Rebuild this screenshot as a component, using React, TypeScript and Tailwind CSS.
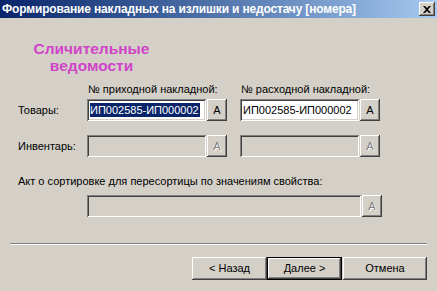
import React from "react"

const sunken =
  "shadow-[inset_1px_1px_0_#808080,inset_-1px_-1px_0_#ffffff,inset_2px_2px_0_#404040,inset_-2px_-2px_0_#d4d0c8]"
const raised =
  "shadow-[inset_-1px_-1px_0_#404040,inset_1px_1px_0_#ffffff,inset_-2px_-2px_0_#808080,inset_2px_2px_0_#d4d0c8]"

function Field({ value, selected, disabled, wide }: { value?: string; selected?: boolean; disabled?: boolean; wide?: boolean }) {
  return (
    <div
      className={`${wide ? "w-[274px]" : "w-[119px]"} h-[22px] flex items-center px-[3px] ${sunken} ${
        disabled ? "bg-[#d4d0c8]" : "bg-white"
      }`}
    >
      {value && (
        <span className={`leading-[14px] ${selected ? "bg-[#0a246a] text-white pr-[1px]" : "text-black"}`}>{value}</span>
      )}
    </div>
  )
}

function PickButton({ disabled }: { disabled?: boolean }) {
  return (
    <div
      className={`w-[20px] h-[22px] flex items-center justify-center bg-[#d4d0c8] ${raised} ${
        disabled ? "text-[#808080] [text-shadow:1px_1px_0_#ffffff]" : "text-black"
      }`}
    >
      A
    </div>
  )
}

function DlgButton({ label, isDefault }: { label: string; isDefault?: boolean }) {
  return (
    <div
      className={`h-[23px] flex items-center justify-center bg-[#d4d0c8] ${
        isDefault
          ? "w-[75px] border border-black shadow-[inset_-1px_-1px_0_#404040,inset_1px_1px_0_#ffffff,inset_-2px_-2px_0_#808080]"
          : `w-[75px] ${raised}`
      }`}
    >
      {label}
    </div>
  )
}

export default function App() {
  return (
    <div className="w-[437px] h-[291px] bg-[#d4d0c8] flex flex-col text-[11px] text-black font-['Liberation_Sans',Arial,sans-serif] overflow-hidden">
      {/* Title bar */}
      <div className="h-[18px] shrink-0 flex items-center justify-between pl-[2px] pr-[2px] bg-gradient-to-r from-[#0a246a] to-[#a6caf0]">
        <span className="text-white font-bold text-[12px] tracking-[-0.17px] leading-[18px] whitespace-nowrap">
          Формирование накладных на излишки и недостачу [номера]
        </span>
        <div className={`w-[16px] h-[14px] bg-[#d4d0c8] flex items-center justify-center ${raised}`}>
          <svg width="8" height="7" viewBox="0 0 8 7">
            <path d="M0 0h2l2 2 2-2h2L5 3.5 8 7H6L4 5 2 7H0l3-3.5z" fill="#000" />
          </svg>
        </div>
      </div>

      {/* Heading */}
      <div className="mt-[22px] w-[183px] text-center text-[15.5px] leading-[17px] font-bold text-[#d044c8]">
        Сличительные
        <br />
        ведомости
      </div>

      {/* Form */}
      <div className="pl-[18px] flex flex-col">
        <div className="mt-[9px] flex leading-[13px]">
          <span className="ml-[70px] w-[153px]">№ приходной накладной:</span>
          <span>№ расходной накладной:</span>
        </div>

        <div className="mt-[3px] flex items-center">
          <span className="w-[69px]">Товары:</span>
          <div className="flex gap-[1px]">
            <Field value="ИП002585-ИП000002" selected />
            <PickButton />
          </div>
          <div className="ml-[13px] flex gap-[1px]">
            <Field value="ИП002585-ИП000002" />
            <PickButton />
          </div>
        </div>

        <div className="mt-[14px] flex items-center">
          <span className="w-[69px]">Инвентарь:</span>
          <div className="flex gap-[1px]">
            <Field disabled />
            <PickButton disabled />
          </div>
          <div className="ml-[13px] flex gap-[1px]">
            <Field disabled />
            <PickButton disabled />
          </div>
        </div>

        <div className="mt-[18px] leading-[13px]">Акт о сортировке для пересортицы по значениям свойства:</div>

        <div className="mt-[7px] ml-[69px] flex gap-[1px]">
          <Field disabled wide />
          <PickButton disabled />
        </div>
      </div>

      {/* Separator */}
      <div className="mt-[26px] mx-[10px] h-[2px] border-t border-[#808080] border-b border-b-white" />

      {/* Buttons */}
      <div className="mt-[12px] pr-[10px] flex justify-end">
        <DlgButton label="< Назад" />
        <DlgButton label="Далее >" isDefault />
        <div className="ml-[1px]">
          <div className={`w-[84px] h-[23px] flex items-center justify-center bg-[#d4d0c8] ${raised}`}>Отмена</div>
        </div>
      </div>
    </div>
  )
}
